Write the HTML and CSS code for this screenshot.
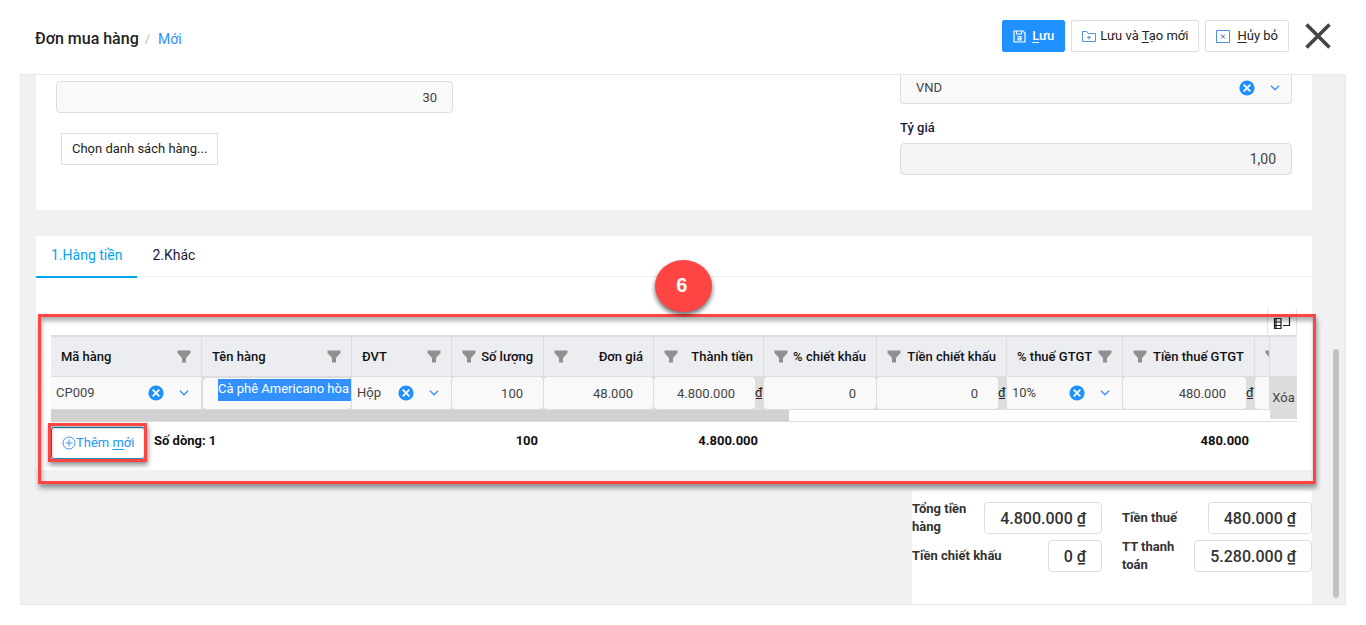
FILE: index.html
```html
<!DOCTYPE html>
<html lang="vi">
<head>
<meta charset="utf-8">
<meta name="viewport" content="width=device-width, initial-scale=1">
<title>Đơn mua hàng</title>
<link rel="stylesheet" href="styles.css">
</head>
<body>
<svg class="sprite" aria-hidden="true">
  <symbol id="funnel" viewBox="0 0 14 13"><path d="M0.5 0.5h13v2.5L9 8v4.5H5V8L0.5 3z" fill="#8f8f8f"/></symbol>
  <symbol id="clear" viewBox="0 0 16 16"><circle cx="8" cy="8" r="7.6" fill="#1e90ff"/><path d="M4.7 4.7l6.600 6.600M11.300 4.700l-6.600 6.600" stroke="#fff" stroke-width="1.800" fill="none"/></symbol>
  <symbol id="chevron" viewBox="0 0 10 6"><path d="M1 0.8l4 4 4-4" stroke="#3b8eff" stroke-width="1.3" fill="none"/></symbol>
</svg>

<header class="topbar">
  <nav class="crumbs">
    <h1 class="crumbs-title">Đơn mua hàng</h1>
    <span class="crumbs-sep">/</span>
    <a class="crumbs-link" href="#">Mới</a>
  </nav>
  <div class="actions">
    <button class="btn btn-primary" type="button">
      <svg class="btn-icon" viewBox="0 0 13 13" fill="none" stroke="#fff" stroke-width="1.200"><path d="M1 1h9l2 2v9H1zM3.5 1v3h5V1M4.500 6.500h3.500v3.500H5V8.300h3"/></svg>
      <span><u>L</u>ưu</span>
    </button>
    <button class="btn" type="button">
      <svg class="btn-icon btn-icon-wide" viewBox="0 0 14 13" fill="none" stroke="#5b8fdb"><path d="M.5 11.5v-10h4.3l1.4 2h7.3v8zM7 5.5v4M5 7.5h4"/></svg>
      <span>Lưu và <u>T</u>ạo mới</span>
    </button>
    <button class="btn" type="button">
      <svg class="btn-icon btn-icon-wide btn-icon-gap" viewBox="0 0 14 13" fill="none" stroke="#4a90e2"><path d="M.5 .5h13v12H.5z"/><path d="M5 4.5l4 4M9 4.5l-4 4" stroke="#2f6fc4"/></svg>
      <span><u>H</u>ủy bỏ</span>
    </button>
    <button class="close" type="button" aria-label="Đóng">
      <svg viewBox="0 0 26 26"><path d="M1.5 1.5l23 23M24.5 1.5l-23 23" stroke="#444" stroke-width="3.6"/></svg>
    </button>
  </div>
</header>

<main class="frame">
  <div class="scroll-thumb"></div>

  <section class="card general">
    <div class="general-left">
      <input class="field field-days" aria-label="Số ngày" value="30">
      <button class="btn btn-choose" type="button">Chọn danh sách hàng...</button>
    </div>
    <div class="general-right">
      <div class="combo combo-currency">
        <select class="combo-select" aria-label="Loại tiền"><option>VND</option></select>
        <button class="combo-clear" type="button" aria-label="Xóa loại tiền"><svg><use href="#clear"/></svg></button>
        <svg class="combo-chevron"><use href="#chevron"/></svg>
      </div>
      <label class="field-label" for="rate">Tỷ giá</label>
      <input class="field field-rate" id="rate" value="1,00" readonly>
    </div>
  </section>

  <section class="card lines">
    <div class="tabs" role="tablist">
      <button class="tab tab-active" type="button" role="tab" aria-selected="true">1.Hàng tiền</button>
      <button class="tab" type="button" role="tab" aria-selected="false">2.Khác</button>
    </div>
    <div class="grid-area">
      <div class="grid-tools">
        <button class="columns-btn" type="button" aria-label="Chọn cột">
          <svg viewBox="0 0 18 13" fill="none" stroke="#222" stroke-width="1.2"><path d="M1.500 1.500h6.500v10H1.500zM3 1.500v10M1.500 5h6.500M1.500 8.500h6.500M16.500 0v8.500H10"/></svg>
        </button>
      </div>
      <table class="grid">
        <colgroup>
          <col class="w-code"><col class="w-name"><col class="w-unit"><col class="w-qty"><col class="w-price"><col class="w-amount"><col class="w-disc"><col class="w-discamt"><col class="w-tax"><col class="w-taxamt"><col><col class="w-del">
        </colgroup>
        <thead>
          <tr>
            <th><div class="head">Mã hàng<svg><use href="#funnel"/></svg></div></th>
            <th><div class="head">Tên hàng<svg><use href="#funnel"/></svg></div></th>
            <th><div class="head">ĐVT<svg><use href="#funnel"/></svg></div></th>
            <th><div class="head"><svg><use href="#funnel"/></svg>Số lượng</div></th>
            <th><div class="head"><svg><use href="#funnel"/></svg>Đơn giá</div></th>
            <th><div class="head"><svg><use href="#funnel"/></svg>Thành tiền</div></th>
            <th><div class="head"><svg><use href="#funnel"/></svg>% chiết khấu</div></th>
            <th><div class="head"><svg><use href="#funnel"/></svg>Tiền chiết khấu</div></th>
            <th><div class="head">% thuế GTGT<svg><use href="#funnel"/></svg></div></th>
            <th><div class="head"><svg><use href="#funnel"/></svg>Tiền thuế GTGT</div></th>
            <th><div class="head head-cut"><svg><use href="#funnel"/></svg></div></th>
            <th></th>
          </tr>
        </thead>
        <tbody>
          <tr>
            <td><div class="combo"><select class="combo-select" aria-label="Mã hàng"><option>CP009</option></select><button class="combo-clear" type="button" aria-label="Xóa mã hàng"><svg><use href="#clear"/></svg></button><svg class="combo-chevron"><use href="#chevron"/></svg></div></td>
            <td><div class="name-box"><input class="name-input" aria-label="Tên hàng" value="Cà phê Americano hòa"></div></td>
            <td><div class="combo"><select class="combo-select" aria-label="ĐVT"><option>Hộp</option></select><button class="combo-clear" type="button" aria-label="Xóa ĐVT"><svg><use href="#clear"/></svg></button><svg class="combo-chevron"><use href="#chevron"/></svg></div></td>
            <td><div class="num"><input class="num-input" aria-label="Số lượng" value="100"></div></td>
            <td><div class="num"><input class="num-input" aria-label="Đơn giá" value="48.000"></div></td>
            <td><div class="num"><input class="num-input num-money" aria-label="Thành tiền" value="4.800.000"><span>₫</span></div></td>
            <td><div class="num"><input class="num-input" aria-label="% chiết khấu" value="0"></div></td>
            <td><div class="num"><input class="num-input num-money" aria-label="Tiền chiết khấu" value="0"><span>₫</span></div></td>
            <td><div class="combo"><select class="combo-select" aria-label="% thuế GTGT"><option>10%</option></select><button class="combo-clear" type="button" aria-label="Xóa % thuế"><svg><use href="#clear"/></svg></button><svg class="combo-chevron"><use href="#chevron"/></svg></div></td>
            <td><div class="num"><input class="num-input num-money" aria-label="Tiền thuế GTGT" value="480.000"><span>₫</span></div></td>
            <td><div class="num num-cut"></div></td>
            <td class="del-cell"><button class="del" type="button">Xóa</button></td>
          </tr>
        </tbody>
      </table>
      <div class="hscroll"><div class="hscroll-thumb"></div></div>
      <table class="summary">
        <colgroup>
          <col class="w-code"><col class="w-name"><col class="w-unit"><col class="w-qty"><col class="w-price"><col class="w-amount"><col class="w-disc"><col class="w-discamt"><col class="w-tax"><col class="w-taxamt"><col><col class="w-del">
        </colgroup>
        <tbody>
          <tr>
            <td colspan="3">
              <div class="add-row">
                <div class="add-wrap">
                  <button class="add" type="button"><svg viewBox="0 0 14 14" fill="none" stroke="#3f97f5"><circle cx="7" cy="7" r="6"/><path d="M7 3.500v7M3.500 7h7"/></svg><span>Thêm <u>m</u>ới</span></button>
                  <div class="add-mark"></div>
                </div>
                <span class="count">Số dòng: 1</span>
              </div>
            </td>
            <td>100</td><td></td><td>4.800.000</td><td></td><td></td><td></td><td>480.000</td><td></td><td></td>
          </tr>
        </tbody>
      </table>
    </div>
    <div class="mark"></div>
    <div class="step">6</div>
  </section>

  <section class="totals">
    <div class="total"><label for="t1">Tổng tiền hàng</label><output id="t1">4.800.000 ₫</output></div>
    <div class="total"><label for="t2">Tiền thuế</label><output id="t2">480.000 ₫</output></div>
    <div class="total"><label for="t3">Tiền chiết khấu</label><output id="t3">0 ₫</output></div>
    <div class="total"><label for="t4">TT thanh toán</label><output id="t4">5.280.000 ₫</output></div>
  </section>
</main>
</body>
</html>
```
FILE: styles.css
```css
* { box-sizing: border-box; }

body {
  margin: 0;
  min-height: 100vh;
  display: flex;
  flex-direction: column;
  background: #fff;
  color: #222;
  font-family: Roboto, "Noto Sans", sans-serif;
  font-size: 13px;
  line-height: 18px;
}

button, input, select { font: inherit; color: inherit; }
button { padding: 0; border: 0; background: none; }
u { text-underline-offset: 2px; }
.sprite { position: absolute; width: 0; height: 0; }

/* Header */
.topbar {
  height: 74px;
  padding: 0 35px;
  display: flex;
  align-items: center;
  justify-content: space-between;
}
.crumbs { display: flex; align-items: center; gap: 6px; padding-top: 4px; }
.crumbs-title { margin: 0; font-size: 16px; font-weight: 500; }
.crumbs-sep { color: #bbb; }
.crumbs-link { margin-left: 2px; font-size: 14px; color: #2e90fa; text-decoration: none; }
.actions { display: flex; align-items: center; gap: 6px; padding-bottom: 2px; }
.btn {
  height: 32px;
  padding: 0 10px;
  display: flex;
  align-items: center;
  gap: 4px;
  border: 1px solid #dedede;
  border-radius: 2px;
  background: #fff;
}
.btn-primary { gap: 6px; border-color: #1e90ff; background: #1e90ff; color: #fff; font-weight: 500; }
.btn-icon { width: 13px; height: 13px; }
.btn-icon-wide { width: 14px; }
.btn-icon-gap { margin-right: 3px; }
.close { width: 26px; height: 26px; margin-left: 10px; }
.close svg { display: block; width: 26px; height: 26px; }

/* Content frame */
.frame {
  flex: 1;
  position: relative;
  margin: 0 20px 20px;
  padding: 0 33px 0 15px;
  display: flex;
  flex-direction: column;
  border: 1px solid #e8e8e8;
  background: #f0f1f3;
}
.scroll-thumb {
  position: absolute;
  right: 6px;
  bottom: 6px;
  width: 6px;
  height: 47%;
  border-radius: 3px;
  background: #c1c3c3;
}
.card { background: #fff; }

/* General fields */
.general {
  display: flex;
  justify-content: space-between;
  padding: 0 20px 35px;
}
.general-left { width: 397px; padding-top: 6px; }
.general-right { width: 392px; }
.field {
  display: block;
  width: 100%;
  height: 32px;
  padding: 0 15px;
  border: 1px solid #dedede;
  border-radius: 4px;
  background: #f9f9f9;
  color: #444;
  text-align: right;
}
.field-rate { background: #f4f4f4; font-size: 14px; }
.btn-choose { margin: 20px 0 0 5px; border-radius: 0; }
.field-label { display: block; margin: 15px 0 6px; font-weight: 500; color: #1a1a3a; }

.combo {
  height: 32px;
  padding: 0 12px 0 5px;
  display: flex;
  align-items: center;
  background: #f9f9f9;
}
.combo-select {
  flex: 1;
  min-width: 0;
  padding: 0;
  appearance: none;
  border: 0;
  background: none;
  color: #444;
}
.combo-clear { flex: none; width: 16px; height: 16px; margin-right: 15px; }
.combo-clear svg { display: block; width: 16px; height: 16px; }
.combo-chevron { flex: none; width: 10px; height: 6px; }
.combo-currency {
  height: 29px;
  padding: 0 11px 3px 15px;
  border: 1px solid #dedede;
  border-top: 0;
  border-radius: 0 0 4px 4px;
}

/* Tabs */
.lines { position: relative; margin-top: 26px; }
.tabs { display: flex; height: 41px; border-bottom: 1px solid #f0f0f0; }
.tab { height: 42px; padding: 0 15px 2px; border-bottom: 2px solid transparent; font-size: 14px; color: #1a1a3a; }
.tab-active { border-bottom-color: #00a5ec; color: #00a5ec; }

/* Item grid */
.grid-area { padding: 30px 15px 11px; }
.grid-tools { display: flex; justify-content: flex-end; }
.columns-btn {
  width: 30px;
  height: 28px;
  padding: 3px 0 0;
  display: grid;
  place-items: center;
  border: 1px solid #e4e4e4;
  border-radius: 3px;
  border-bottom: 0;
  border-top-color: transparent;
}
.columns-btn svg { width: 18px; height: 13px; }
.grid, .summary { width: 100%; table-layout: fixed; border-collapse: separate; border-spacing: 0; }
.w-code { width: 151px; }
.w-name { width: 150px; }
.w-unit { width: 100px; }
.w-qty { width: 92px; }
.w-price { width: 110px; }
.w-amount { width: 110px; }
.w-disc { width: 113px; }
.w-discamt { width: 130px; }
.w-tax { width: 116px; }
.w-taxamt { width: 132px; }
.w-del { width: 27px; }
.grid th {
  height: 42px;
  padding: 0 10px;
  border: 0 solid #ddd;
  border-width: 2px 1px 1px 0;
  background: #ecedf1;
  font-weight: 500;
  color: #111;
}
.grid th:last-child { border-right: 0; }
.head { display: flex; align-items: center; justify-content: space-between; white-space: nowrap; overflow: hidden; }
.head svg { flex: none; width: 14px; height: 13px; }
.grid th:nth-child(n+11) { padding-right: 0; }
.grid td {
  height: 33px;
  padding: 0;
  border: 0 solid #ddd;
  border-width: 0 1px 1px 0;
  background: #ddd;
}
.num { display: flex; align-items: center; height: 32px; }
.num-input {
  flex: 1;
  min-width: 0;
  height: 32px;
  padding: 0 20px;
  border: 0;
  border-radius: 4px;
  background: #f9f9f9;
  color: #444;
  text-align: right;
}
.num span { width: 8px; }
.num-money { padding: 0 20px 0 0; }
.num-cut { border-radius: 4px 0 0 4px; background: #f9f9f9; }
.name-box { height: 31px; padding: 1px 0 0 15px; margin: 0 0 0 1px; border-radius: 4px; background: #f9f9f9; }
.name-input {
  display: block;
  width: 100%;
  height: 22px;
  padding: 0 0 2px;
  border: 0;
  background: #3390ff;
  color: #fff;
}
.grid .del-cell { position: relative; border: 0; }
.del { position: absolute; inset: 0 0 -9px 0; background: #ddd; color: #444; }
.hscroll { height: 12px; border-bottom: 1px solid #ddd; }
.hscroll-thumb { width: 60%; max-width: 738px; height: 11px; background: #d1d1d1; }

/* Summary row */
.summary td { padding: 10px 6px 0 0; text-align: right; vertical-align: top; font-weight: 700; color: #111; }
.summary td:first-child { padding: 5px 0 0; }
.add-row { display: flex; align-items: flex-start; gap: 9px; }
.add-wrap { position: relative; }
.add {
  display: flex;
  align-items: center;
  width: 94px;
  height: 32px;
  padding-left: 10px;
  border: 1px solid #1690c8;
  border-radius: 3px;
  color: #1b98f5;
  font-weight: 400;
}
.add svg { width: 14px; height: 14px; }
.add-mark {
  position: absolute;
  inset: -4px -2px -3px -3px;
  border: 3px solid #f44;
  box-shadow: 1px 3px 5px rgba(0, 0, 0, .45), inset 1px 2px 3px rgba(0, 0, 0, .3);
  pointer-events: none;
}
.count { padding-top: 5px; }

/* Callout */
.mark {
  position: absolute;
  inset: 78px -4px -14px 2px;
  border: 3px solid #f44;
  box-shadow: 1px 4px 5px rgba(0, 0, 0, .4), inset 1px 4px 4px rgba(0, 0, 0, .3);
  pointer-events: none;
}
.step {
  position: absolute;
  top: 24px;
  left: 48.5%;
  width: 57px;
  height: 52px;
  padding-right: 3px;
  border-radius: 50%;
  background: #f44;
  box-shadow: 0 3px 5px rgba(0, 0, 0, .6);
  color: #fff;
  font: bold 20px/50px "Liberation Sans", sans-serif;
  text-align: center;
}

/* Totals */
.totals {
  flex: 1;
  align-self: flex-end;
  width: 400px;
  margin-top: 20px;
  padding-top: 12px;
  display: grid;
  grid-template-columns: 1fr 1fr;
  grid-auto-rows: 32px;
  gap: 6px 20px;
  border-radius: 3px;
  background: #fff;
}
.total { display: flex; align-items: center; justify-content: space-between; gap: 12px; }
.total label { font-weight: 700; color: #333; }
.total output {
  height: 32px;
  padding: 0 15px;
  border: 1px solid #dedede;
  border-radius: 4px;
  color: #333;
  font-size: 16px;
  font-weight: 500;
  line-height: 32px;
  white-space: nowrap;
}
```
